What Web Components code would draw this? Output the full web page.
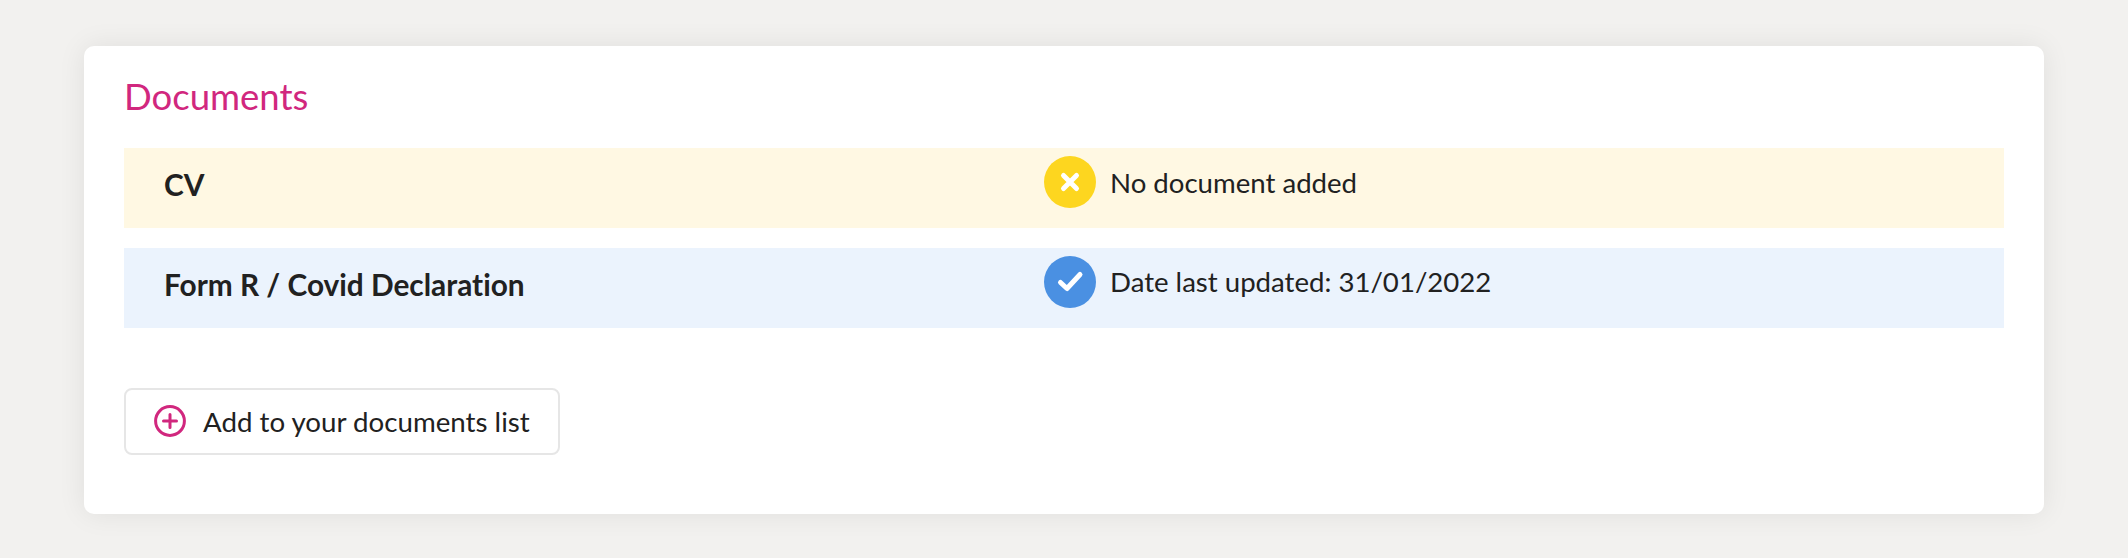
<!DOCTYPE html>
<html lang="en">
<head>
<meta charset="utf-8">
<title>Documents</title>
<style>
  html, body { margin: 0; height: 100%; }
  body {
    background: #f2f1ef;
    color: #212121;
    font-family: Lato, "Liberation Sans", sans-serif;
    font-variant-ligatures: none;
    padding: 46px 84px 0;
    box-sizing: border-box;
  }
</style>
</head>
<body>
<doc-card heading="Documents">
  <doc-row name="CV" status="missing">No document added</doc-row>
  <doc-row name="Form R / Covid Declaration" status="ok">Date last updated: 31/01/2022</doc-row>
  <add-button slot="footer">Add to your documents list</add-button>
</doc-card>

<script>
class DocCard extends HTMLElement {
    constructor() {
        super();
        this.shadowDOM = this.attachShadow({mode: "open"});
    }

    connectedCallback() {
        this.shadowDOM.innerHTML = `
        <style>
        :host {
            display: block;
            height: 467.5px;
            box-sizing: border-box;
            padding: 29px 40px 0;
            background: #fff;
            border-radius: 10px;
            box-shadow: 0 0 28px rgba(0,0,0,0.08);
        }
        h2 {
            margin: 0 0 31px;
            font-size: 36.5px;
            line-height: 42px;
            font-weight: 400;
            color: #d1277e;
        }
        .rows {
            display: flex;
            flex-direction: column;
            gap: 20px;
        }
        .footer {
            margin-top: 60px;
        }
        </style>
        <h2>${this.getAttribute("heading")}</h2>
        <div class="rows"><slot></slot></div>
        <div class="footer"><slot name="footer"></slot></div>
        `;
    }
}

class DocRow extends HTMLElement {
    constructor() {
        super();
        this.shadowDOM = this.attachShadow({mode: "open"});
    }

    connectedCallback() {
        const ok = this.getAttribute("status") === "ok";
        const mark = ok
            ? `<path d="M16.5 26.5l6.5 6 13-14" />`
            : `<path d="M19.5 19.5l13 13M32.5 19.5l-13 13" />`;
        this.shadowDOM.innerHTML = `
        <style>
        :host {
            display: grid;
            grid-template-columns: 880px 1fr;
            height: 79.75px;
            padding-left: 40px;
            background: ${ok ? "#ebf3fd" : "#fff8e3"};
        }
        .name {
            align-self: center;
            padding-bottom: 6px;
            font-size: 29.8px;
            font-weight: 700;
        }
        .status {
            display: flex;
            align-items: center;
            gap: 14px;
            height: 52px;
            margin-top: 8px;
            font-size: 27.6px;
        }
        svg {
            display: block;
            flex: none;
            width: 52px;
            height: 52px;
        }
        circle { fill: ${ok ? "#4a90e2" : "#fdd61f"}; }
        path {
            fill: none;
            stroke: #fff;
            stroke-width: 5;
            stroke-linecap: round;
            stroke-linejoin: round;
        }
        </style>
        <div class="name">${this.getAttribute("name")}</div>
        <div class="status">
            <svg viewBox="0 0 52 52"><circle cx="26" cy="26" r="26"/>${mark}</svg>
            <span><slot></slot></span>
        </div>
        `;
    }
}

class AddButton extends HTMLElement {
    constructor() {
        super();
        this.shadowDOM = this.attachShadow({mode: "open"});
    }

    connectedCallback() {
        this.shadowDOM.innerHTML = `
        <style>
        :host {
            display: inline-flex;
            align-items: center;
            gap: 17px;
            height: 67.5px;
            box-sizing: border-box;
            padding: 0 28px;
            border: 2px solid #e6e6e6;
            border-radius: 8px;
            font-size: 27.7px;
        }
        svg {
            display: block;
            width: 32px;
            height: 32px;
        }
        </style>
        <svg viewBox="0 0 32 32" fill="none" stroke="#d1277e" stroke-linecap="round">
            <circle cx="16" cy="16" r="14.4" stroke-width="3"/>
            <path d="M16 9.5v13M9.5 16h13" stroke-width="3"/>
        </svg>
        <span><slot></slot></span>
        `;
    }
}

customElements.define("doc-card", DocCard);
customElements.define("doc-row", DocRow);
customElements.define("add-button", AddButton);
</script>
</body>
</html>
